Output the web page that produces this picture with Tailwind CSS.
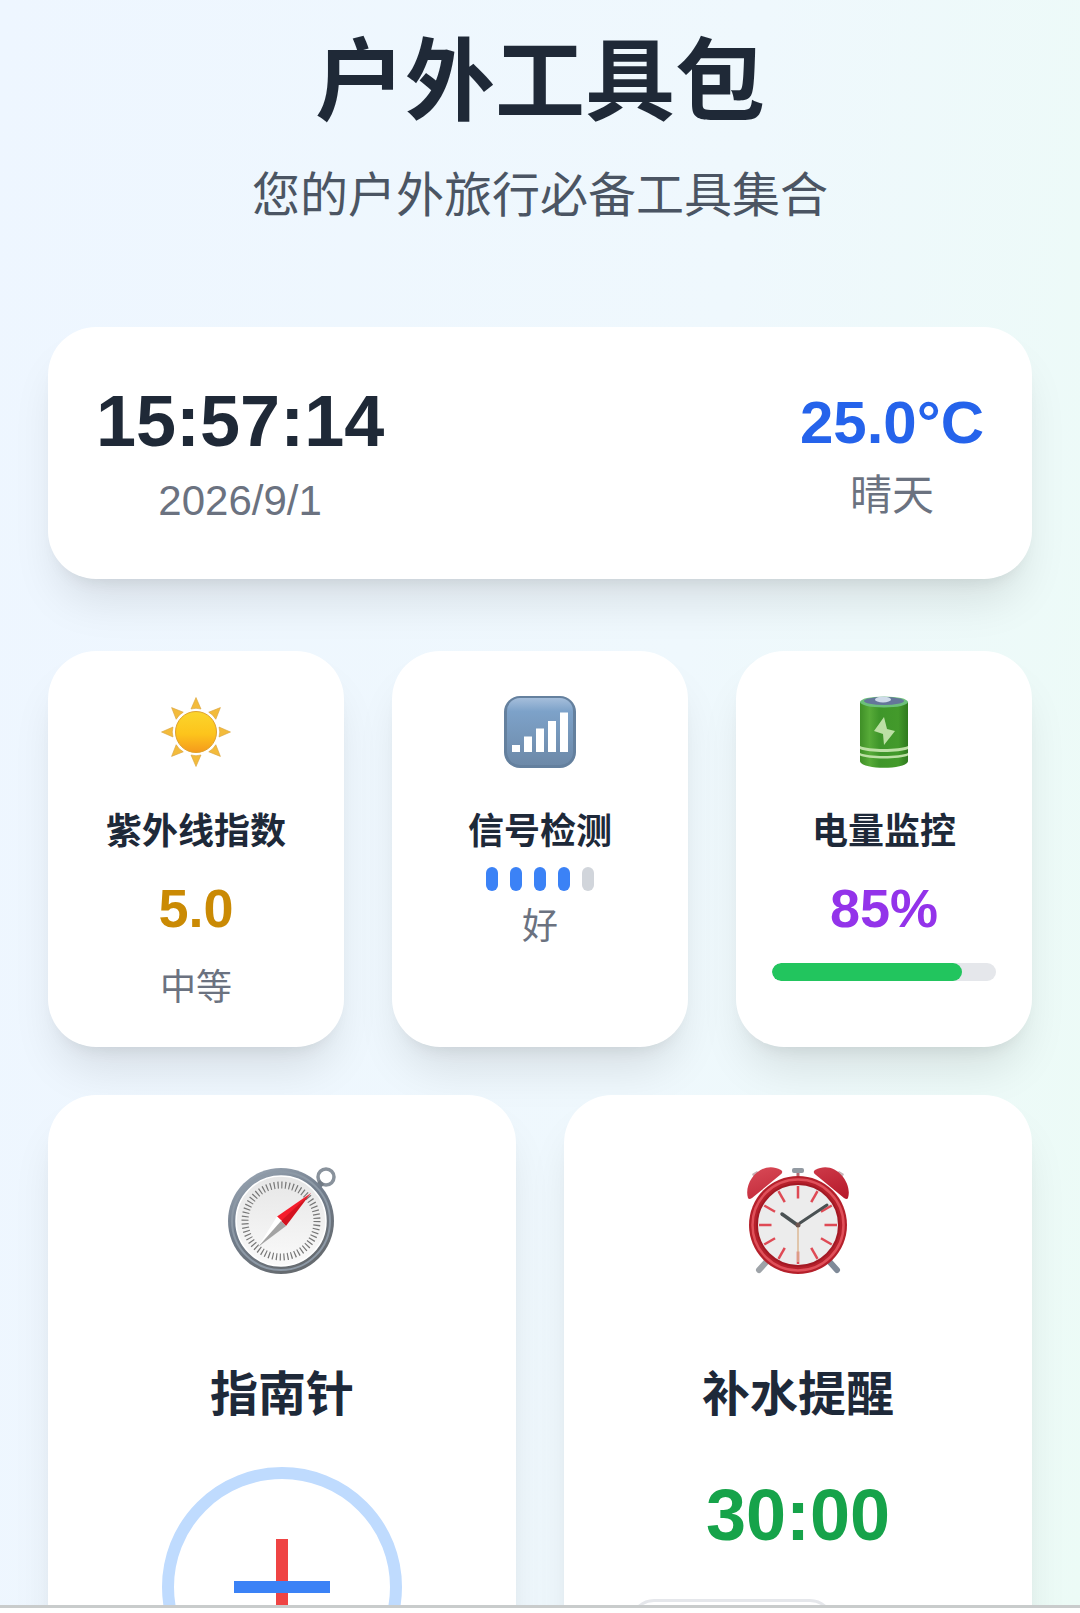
<!DOCTYPE html>
<html lang="zh-CN">
<head>
<meta charset="utf-8">
<meta name="viewport" content="width=device-width, initial-scale=1">
<title>户外工具包</title>
<script src="https://cdn.jsdelivr.net/npm/@tailwindcss/browser@4"></script>
</head>
<body class="flex h-screen flex-col bg-white pb-[5px] font-['Liberation_Sans','Noto_Sans_CJK_SC',sans-serif] text-gray-800">
<main class="min-h-0 flex-1 overflow-hidden border-b-3 border-[#c9cccc] bg-[linear-gradient(97deg,#eef6ff,#eff8fd_60%,#ecfbf6)] px-12 pt-6">
  <header class="text-center">
    <h1 class="text-[90px] leading-[116px] font-bold text-[#1f2937]">户外工具包</h1>
    <p class="mt-5 text-5xl leading-[71px] text-[#4b5563]">您的户外旅行必备工具集合</p>
  </header>

  <section class="mt-24 flex items-center justify-between rounded-[48px] bg-white p-12 text-center shadow-[0_30px_45px_-9px_rgb(0_0_0/0.1),0_12px_18px_-12px_rgb(0_0_0/0.1)]">
    <div>
      <div class="text-7xl leading-[92px] font-bold text-[#1f2937]">15:57:14</div>
      <div class="mt-1 text-[42px] leading-[60px] text-[#6b7280]">2026/9/1</div>
    </div>
    <div>
      <div class="text-6xl leading-[86px] font-bold text-[#2563eb]">25.0°C</div>
      <div class="text-[42px] leading-[60px] text-[#6b7280]">晴天</div>
    </div>
  </section>

  <section class="mt-18 grid grid-cols-3 gap-12 text-center">
    <article class="flex flex-col items-center rounded-[48px] bg-white px-9 pt-11 pb-8 shadow-[0_30px_45px_-9px_rgb(0_0_0/0.1),0_12px_18px_-12px_rgb(0_0_0/0.1)]">
      <svg class="size-[74px]" viewBox="0 0 74 74" aria-hidden="true">
        <defs>
          <linearGradient id="sun" x1="0" y1="0" x2="0" y2="1"><stop offset="0" stop-color="#fbd52c"/><stop offset=".55" stop-color="#fdc41c"/><stop offset="1" stop-color="#f59a1c"/></linearGradient>
          <path id="ray" d="M37 2.500 42 14Q37 12.500 32 14Z"/>
        </defs>
        <g fill="#f3bb3b" stroke="#d9a23a" stroke-width=".6">
          <use href="#ray"/><use href="#ray" transform="rotate(45 37 37)"/><use href="#ray" transform="rotate(90 37 37)"/><use href="#ray" transform="rotate(135 37 37)"/><use href="#ray" transform="rotate(180 37 37)"/><use href="#ray" transform="rotate(225 37 37)"/><use href="#ray" transform="rotate(270 37 37)"/><use href="#ray" transform="rotate(315 37 37)"/>
        </g>
        <circle cx="37" cy="37" r="20.500" fill="url(#sun)" stroke="#dfa22c"/>
      </svg>
      <h2 class="mt-9 text-4xl leading-[54px] font-bold">紫外线指数</h2>
      <div class="mt-3 text-[54px] leading-[74px] font-bold text-[#ca8a04]">5.0</div>
      <div class="mt-4 text-4xl leading-[54px] text-[#6b7280]">中等</div>
    </article>

    <article class="flex flex-col items-center rounded-[48px] bg-white px-9 pt-11 pb-8 shadow-[0_30px_45px_-9px_rgb(0_0_0/0.1),0_12px_18px_-12px_rgb(0_0_0/0.1)]">
      <svg class="size-[74px]" viewBox="0 0 74 74" aria-hidden="true">
        <defs><linearGradient id="sig" x1="0" y1="0" x2="0" y2="1"><stop offset="0" stop-color="#a5bedb"/><stop offset=".2" stop-color="#7da2c9"/><stop offset="1" stop-color="#6d89a8"/></linearGradient></defs>
        <rect x="1" y="1" width="72" height="72" rx="16" fill="#64809e"/>
        <rect x="4" y="3" width="66" height="67" rx="13" fill="url(#sig)"/>
        <path fill="#fff" d="M9 50h8v7H9zM21 41.500h8V57h-8zM33 33.500h8V57h-8zM45 26h8v31h-8zM57 17.500h8V57h-8z"/>
      </svg>
      <h2 class="mt-9 text-4xl leading-[54px] font-bold">信号检测</h2>
      <div class="mt-2 flex gap-3">
        <span class="h-6 w-3 rounded-full bg-[#3b82f6]"></span>
        <span class="h-6 w-3 rounded-full bg-[#3b82f6]"></span>
        <span class="h-6 w-3 rounded-full bg-[#3b82f6]"></span>
        <span class="h-6 w-3 rounded-full bg-[#3b82f6]"></span>
        <span class="h-6 w-3 rounded-full bg-[#d1d5db]"></span>
      </div>
      <div class="mt-2 text-4xl leading-[56px] text-[#6b7280]">好</div>
    </article>

    <article class="flex flex-col items-center rounded-[48px] bg-white px-9 pt-11 pb-8 shadow-[0_30px_45px_-9px_rgb(0_0_0/0.1),0_12px_18px_-12px_rgb(0_0_0/0.1)]">
      <svg class="size-[74px]" viewBox="0 0 74 74" aria-hidden="true">
        <defs><linearGradient id="bat"><stop offset="0" stop-color="#3f8f27"/><stop offset=".2" stop-color="#57ab38"/><stop offset=".4" stop-color="#3f962a"/><stop offset=".8" stop-color="#439a2b"/><stop offset="1" stop-color="#2f7a1e"/></linearGradient></defs>
        <path fill="url(#bat)" d="M13 7v59c0 9 48 9 48 0V7z"/>
        <ellipse cx="37" cy="7" rx="24" ry="5.500" fill="#6cc07a"/>
        <ellipse cx="37" cy="6" rx="20" ry="4" fill="#64769a"/>
        <ellipse cx="36" cy="4.500" rx="8" ry="3" fill="#cfdbea"/>
        <path fill="#bde0a5" d="m37 22 3 12 8 2-11 14-1-11-9-3zM13 51c8 4 40 4 48 0v3c-8 4-40 4-48 0zM13 58c8 4 40 4 48 0v2.500c-8 4-40 4-48 0z"/>
      </svg>
      <h2 class="mt-9 text-4xl leading-[54px] font-bold">电量监控</h2>
      <div class="mt-3 text-[54px] leading-[74px] font-bold text-[#9333ea]">85%</div>
      <div class="mt-[18px] h-[18px] w-full overflow-hidden rounded-full bg-[#e5e7eb]" role="progressbar" aria-label="电量监控" aria-valuenow="85" aria-valuemin="0" aria-valuemax="100">
        <div class="h-full rounded-full bg-[#22c55e]" style="width:85%"></div>
      </div>
    </article>
  </section>

  <section class="mt-12 grid grid-cols-2 gap-12 text-center">
    <article class="flex flex-col items-center rounded-[48px] bg-white px-12 pt-18 pb-12 shadow-[0_30px_45px_-9px_rgb(0_0_0/0.1),0_12px_18px_-12px_rgb(0_0_0/0.1)]">
      <svg class="size-27" viewBox="0 0 108 108" aria-hidden="true">
        <defs>
          <linearGradient id="rim" x1="0" y1="0" x2=".5" y2="1"><stop offset="0" stop-color="#a1adba"/><stop offset=".5" stop-color="#717d8c"/><stop offset="1" stop-color="#666b70"/></linearGradient>
          <linearGradient id="face" x1="0" y1="0" x2="0" y2="1"><stop offset="0" stop-color="#e6e6e6"/><stop offset="1" stop-color="#fafafa"/></linearGradient>
        </defs>
        <circle cx="98" cy="10" r="8" fill="none" stroke="#89929c" stroke-width="3.500"/>
        <path d="m88 22 6-7" stroke="#727b85" stroke-width="6"/>
        <circle cx="53" cy="54" r="53" fill="url(#rim)"/>
        <circle cx="53" cy="54" r="49" fill="none" stroke="#8d99a6" stroke-width="2"/>
        <circle cx="53" cy="54" r="45" fill="url(#face)" stroke="#fff" stroke-width="1.500"/>
        <circle cx="53" cy="54" r="36" fill="none" stroke="#777" stroke-width="7" stroke-dasharray="1.200 2.570"/>
        <path fill="#f51c2b" d="M83 26 49 49.500l5 5z"/><path fill="#d4121f" d="M83 26 58 59l-5-5z"/>
        <path fill="#fff" d="M49 49.500 30 80l24-26z"/><path fill="#a3a3a3" d="m30 80 23-26 5 5z"/>
      </svg>
      <h2 class="mt-[84px] text-5xl leading-[72px] font-bold">指南针</h2>
      <div class="mt-9 grid size-60 shrink-0 place-items-center rounded-full border-12 border-[#bfdbfe]">
        <span class="col-start-1 row-start-1 h-24 w-3 bg-[#ef4444]"></span>
        <span class="col-start-1 row-start-1 h-3 w-24 bg-[#3b82f6]"></span>
      </div>
    </article>

    <article class="flex flex-col items-center rounded-[48px] bg-white px-12 pt-18 pb-12 shadow-[0_30px_45px_-9px_rgb(0_0_0/0.1),0_12px_18px_-12px_rgb(0_0_0/0.1)]">
      <svg class="size-27" viewBox="1 1 108 108" aria-hidden="true">
        <defs>
          <linearGradient id="bell" x1="0" y1="0" x2="1" y2="1"><stop offset="0" stop-color="#d94a57"/><stop offset="1" stop-color="#b5182a"/></linearGradient>
          <path id="tick" d="M55 20v12.500"/>
        </defs>
        <g stroke-linecap="round" stroke-width="6"><path d="m25 94-9 10" stroke="#9ea3a8"/><path d="m85 94 9 10" stroke="#7f8a98"/></g>
        <path d="M55 4v15" stroke="#b56a70" stroke-width="3"/><rect x="49" y="2" width="12" height="5" rx="2" fill="#929aa2"/>
        <path d="m23 23 8 10M87 23l-8 10" stroke="#8b6a6d" stroke-width="5"/>
        <path fill="#c8b4b8" d="m9 8 5-3 5 5-7 4zM101 8l-5-3-5 5 7 4z"/>
        <path fill="url(#bell)" d="M5 32C0 16 19-7 38 4q3 2-1 5L9 32q-3 2-4 0zM105 32C110 16 91-7 72 4q-3 2 1 5l28 23q3 2 4 0z"/>
        <circle cx="55" cy="59" r="49" fill="#b5202b"/>
        <circle cx="55" cy="59" r="45.500" fill="none" stroke="#e0505a" stroke-width="2.500"/>
        <circle cx="55" cy="59" r="41" fill="#ececec" stroke="#a31924" stroke-width="2"/>
        <g stroke="#df4a55" stroke-width="2.500">
          <use href="#tick"/><use href="#tick" transform="rotate(30 55 59)"/><use href="#tick" transform="rotate(60 55 59)"/><use href="#tick" transform="rotate(90 55 59)"/><use href="#tick" transform="rotate(120 55 59)"/><use href="#tick" transform="rotate(150 55 59)"/><use href="#tick" transform="rotate(180 55 59)"/><use href="#tick" transform="rotate(210 55 59)"/><use href="#tick" transform="rotate(240 55 59)"/><use href="#tick" transform="rotate(270 55 59)"/><use href="#tick" transform="rotate(300 55 59)"/><use href="#tick" transform="rotate(330 55 59)"/>
        </g>
        <path d="M55 59v37" stroke="#ddb995" stroke-width="1.500"/>
        <g fill="none" stroke="#4a5153" stroke-linecap="round"><path d="M39 48 53 58" stroke-width="3.500"/><path d="m57 57 27-18" stroke-width="3"/></g>
        <circle cx="55" cy="59" r="2.500" fill="#6d5550"/>
      </svg>
      <h2 class="mt-[84px] text-5xl leading-[72px] font-bold">补水提醒</h2>
      <div class="mt-9 text-7xl leading-[96px] font-bold text-[#16a34a]">30:00</div>
      <div class="mt-9 w-[336px]">
        <input type="number" aria-label="补水提醒" class="block h-24 w-[204px] rounded-3xl border-3 border-[#e5e7eb] bg-white px-6 text-[42px]">
      </div>
    </article>
  </section>
</main>
</body>
</html>
